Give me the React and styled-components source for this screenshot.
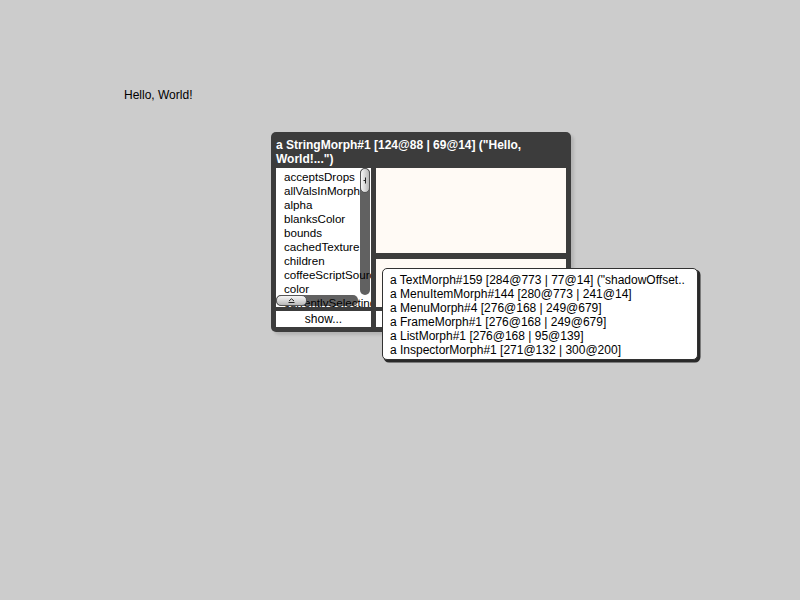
import React from "react";
import styled, { createGlobalStyle } from "styled-components";

const GlobalStyle = createGlobalStyle`
  html, body {
    margin: 0;
    padding: 0;
    background: #cccccc;
  }
  body {
    font-family: "Liberation Sans", Arial, sans-serif;
  }
`;

const World = styled.div`
  position: relative;
  width: 800px;
  height: 600px;
  overflow: hidden;
  background: #cccccc;
  color: #000;
  font-family: "Liberation Sans", Arial, sans-serif;
`;

const StringMorph = styled.div`
  position: absolute;
  left: 124px;
  top: 88px;
  font-size: 12px;
  line-height: 14px;
  white-space: nowrap;
`;

const Inspector = styled.div`
  position: absolute;
  left: 271px;
  top: 132px;
  width: 300px;
  height: 200px;
  box-sizing: border-box;
  padding: 0 5px 5px;
  display: flex;
  flex-direction: column;
  background: rgb(60, 60, 60);
  border-radius: 5px;
  box-shadow: 3px 3px 3px rgba(0, 0, 0, 0.12);
`;

const Label = styled.div`
  height: 36px;
  box-sizing: border-box;
  padding-top: 6px;
  color: #fff;
  font-size: 12px;
  font-weight: bold;
  line-height: 14px;
`;

const Body = styled.div`
  display: grid;
  grid-template-columns: 95px 190px;
  grid-template-rows: 139px 16px;
  column-gap: 5px;
  row-gap: 4px;
`;

const List = styled.div`
  position: relative;
  overflow: hidden;
  background: #fff;
`;

const Items = styled.div`
  padding: 2px 0 0 8px;
  font-size: 11.6px;
  line-height: 14px;
  white-space: nowrap;
`;

const Track = styled.div`
  position: absolute;
  background: rgba(0, 0, 0, 0.62);
  border-radius: 5px;
  ${(p) =>
    p.$vertical
      ? "top: 0; right: 1px; width: 10px; height: 127px;"
      : "left: 0; bottom: 1px; height: 11px; width: 82px;"}
`;

const Knob = styled.div`
  position: absolute;
  top: 0;
  left: 0;
  box-sizing: border-box;
  display: flex;
  align-items: center;
  justify-content: center;
  width: ${(p) => (p.$vertical ? 10 : 31)}px;
  height: ${(p) => (p.$vertical ? 25 : 11)}px;
  border: 1px solid #555;
  border-radius: 5px;
  background: linear-gradient(
    ${(p) => (p.$vertical ? "90deg" : "180deg")},
    #f6f6f6 0%,
    #dcdcdc 45%,
    #b8b8b8 100%
  );
`;

const Panes = styled.div`
  display: flex;
  flex-direction: column;
  gap: 6px;
`;

const Pane = styled.div`
  background: rgb(255, 250, 245);
  height: ${(p) => p.$h}px;
  flex: ${(p) => (p.$grow ? 1 : "none")};
`;

const Button = styled.div`
  background: #fff;
  font-size: 12px;
  line-height: 16px;
  text-align: center;
  white-space: nowrap;
  overflow: hidden;
`;

const ButtonRow = styled.div`
  display: flex;
  gap: 5px;
  ${Button} {
    flex: 1;
  }
`;

const Handle = styled.div`
  width: 16px;
  flex: none;
`;

const Menu = styled.div`
  position: absolute;
  left: 382px;
  top: 268px;
  width: 316px;
  height: 92px;
  box-sizing: border-box;
  padding: 4px 0 0 7px;
  background: #fff;
  border: 1px solid rgb(50, 50, 50);
  border-radius: 5px;
  box-shadow: 2px 2px 0 0.5px rgba(0, 0, 0, 0.8);
  font-size: 12px;
  line-height: 14px;
  white-space: nowrap;
`;

const MenuItem = styled.div`
  height: 14px;
`;

const properties = [
  "acceptsDrops",
  "allValsInMorph",
  "alpha",
  "blanksColor",
  "bounds",
  "cachedTexture",
  "children",
  "coffeeScriptSource",
  "color",
  "currentlySelecting",
];

const menuItems = [
  'a TextMorph#159 [284@773 | 77@14] ("shadowOffset..',
  "a MenuItemMorph#144 [280@773 | 241@14]",
  "a MenuMorph#4 [276@168 | 249@679]",
  "a FrameMorph#1 [276@168 | 249@679]",
  "a ListMorph#1 [276@168 | 95@139]",
  "a InspectorMorph#1 [271@132 | 300@200]",
];

const Grip = ({ vertical }) =>
  vertical ? (
    <svg width="4" height="7" viewBox="0 0 4 7">
      <path d="M2.5 0.5 V6.5 M0.5 3.5 H2" stroke="#222" strokeWidth="1" fill="none" />
    </svg>
  ) : (
    <svg width="7" height="5" viewBox="0 0 7 5">
      <path d="M1 3 L3.5 0.8 L6 3 M0.5 4.5 H6.5" stroke="#222" strokeWidth="1" fill="none" />
    </svg>
  );

export default function App() {
  return (
    <World>
      <GlobalStyle />
      <StringMorph>Hello, World!</StringMorph>

      <Inspector>
        <Label>a StringMorph#1 [124@88 | 69@14] ("Hello, World!...")</Label>
        <Body>
          <List>
            <Items>
              {properties.map((name) => (
                <div key={name}>{name}</div>
              ))}
            </Items>
            <Track $vertical>
              <Knob $vertical>
                <Grip vertical />
              </Knob>
            </Track>
            <Track>
              <Knob>
                <Grip />
              </Knob>
            </Track>
          </List>
          <Panes>
            <Pane $h={85} />
            <Pane $grow />
          </Panes>
          <Button>show...</Button>
          {/* inspect / edit / close buttons and resize handle sit under the popup menu */}
          <ButtonRow>
            <Button aria-label="inspect..." />
            <Button aria-label="edit..." />
            <Button aria-label="close..." />
            <Handle />
          </ButtonRow>
        </Body>
      </Inspector>

      <Menu>
        {menuItems.map((item) => (
          <MenuItem key={item}>{item}</MenuItem>
        ))}
      </Menu>
    </World>
  );
}
